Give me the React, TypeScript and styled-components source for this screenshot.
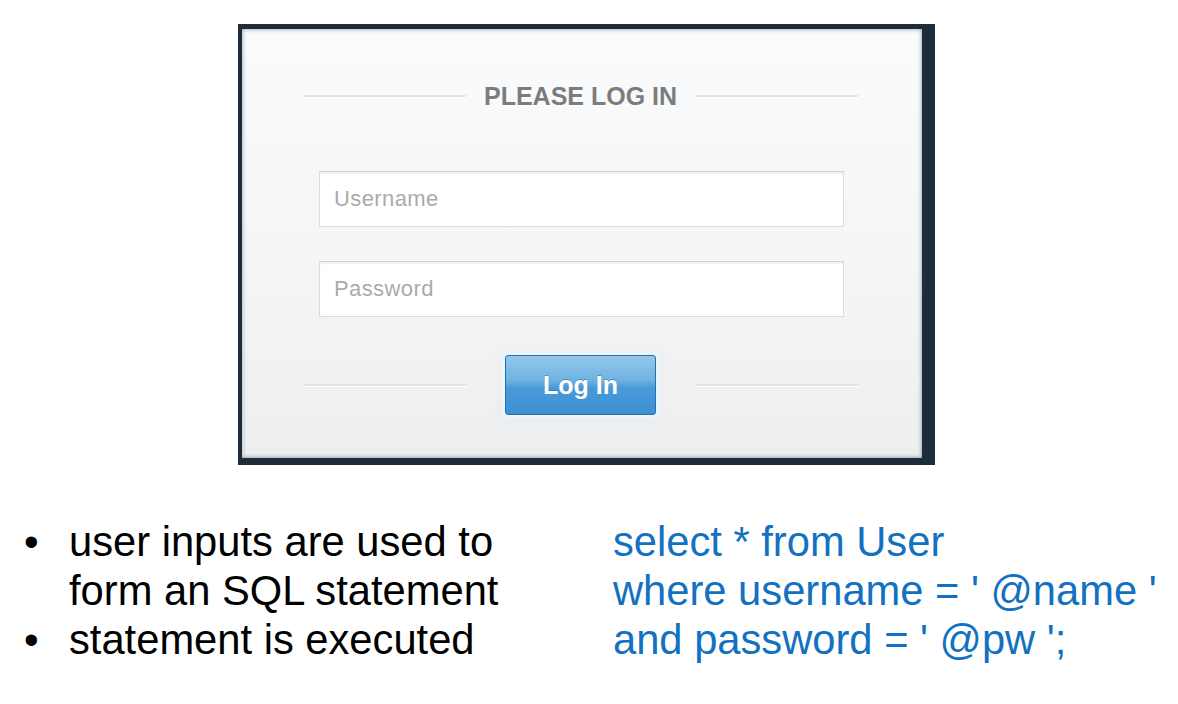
import React from "react";
import styled, { createGlobalStyle } from "styled-components";

const GlobalStyle = createGlobalStyle`
  html, body {
    margin: 0;
    padding: 0;
    background: #ffffff;
  }
  body {
    font-family: "Liberation Sans", Arial, sans-serif;
  }
`;

const Page = styled.div`
  width: 1178px;
  height: 704px;
  overflow: hidden;
  display: flex;
  flex-direction: column;
`;

const Frame = styled.div`
  align-self: flex-start;
  margin: 24px 0 0 238px;
  border-style: solid;
  border-color: #1c2c3b;
  border-width: 5px 13px 7px 4px;
`;

const Panel = styled.div`
  box-sizing: border-box;
  width: 680px;
  height: 429px;
  padding: 52px 64px 0 61px;
  display: flex;
  flex-direction: column;
  background: linear-gradient(180deg, #fafbfc 0%, #f4f5f7 55%, #eceef0 100%);
  box-shadow: inset 0 0 4px rgba(28, 44, 59, 0.55), inset 2px 2px 0 #ffffff;
`;

const Row = styled.div<{ $gap: number; $height: number }>`
  display: flex;
  align-items: center;
  gap: ${(p) => p.$gap}px;
  height: ${(p) => p.$height}px;
`;

const Rule = styled.div`
  flex: 1;
  height: 2px;
  background: #e1e3e5;
  box-shadow: 0 1px 0 #ffffff;
`;

const Title = styled.h1`
  margin: 0;
  font-size: 25px;
  font-weight: bold;
  color: #7b7c7e;
  text-shadow: 0 1px 0 #ffffff;
  white-space: nowrap;
`;

const Field = styled.input<{ $top: number }>`
  box-sizing: border-box;
  width: 525px;
  height: 56px;
  margin: ${(p) => p.$top}px 0 0 16px;
  padding: 0 14px;
  border: 1px solid #d9dbdd;
  border-top-color: #cfd1d3;
  background: #ffffff;
  box-shadow: inset 0 2px 2px rgba(0, 0, 0, 0.06);
  font-family: "Liberation Sans", Arial, sans-serif;
  font-size: 22px;
  letter-spacing: 0.4px;
  color: #555;
  outline: none;

  &::placeholder {
    color: #a9abad;
  }
`;

const ButtonRow = styled(Row)`
  margin-top: 38px;
`;

const LoginButton = styled.button`
  width: 151px;
  height: 60px;
  border: 1px solid #2d6fa6;
  border-radius: 3px;
  background: linear-gradient(
    180deg,
    #93c8ec 0%,
    #6fb2e2 42%,
    #4a9ad8 55%,
    #3c90d2 100%
  );
  box-shadow: 0 0 0 4px #e9f5fd, 0 0 6px 5px rgba(250, 225, 205, 0.35);
  font-family: "Liberation Sans", Arial, sans-serif;
  font-size: 25px;
  font-weight: bold;
  color: #ffffff;
  text-shadow: 0 -1px 0 rgba(20, 70, 120, 0.35);
  cursor: pointer;
`;

const Notes = styled.div`
  display: flex;
  margin-top: 52px;
  padding-left: 24px;
  font-size: 41.7px;
  line-height: 49px;
`;

const BulletList = styled.ul`
  width: 589px;
  margin: 0;
  padding: 0;
  list-style: none;
  color: #000000;
`;

const BulletItem = styled.li`
  display: flex;
`;

const Marker = styled.span`
  width: 45px;
  flex-shrink: 0;
`;

const BulletText = styled.span`
  max-width: 450px;
`;

const Query = styled.div`
  color: #1271c0;
`;

const QueryLine = styled.div`
  white-space: pre;
`;

export default function App() {
  return (
    <>
      <GlobalStyle />
      <Page>
        <Frame>
          <Panel>
            <Row $gap={18} $height={30}>
              <Rule />
              <Title>PLEASE LOG IN</Title>
              <Rule />
            </Row>
            <Field $top={60} type="text" placeholder="Username" />
            <Field $top={34} type="password" placeholder="Password" />
            <ButtonRow $gap={39} $height={60}>
              <Rule />
              <LoginButton>Log In</LoginButton>
              <Rule />
            </ButtonRow>
          </Panel>
        </Frame>

        <Notes>
          <BulletList>
            <BulletItem>
              <Marker>•</Marker>
              <BulletText>user inputs are used to form an SQL statement</BulletText>
            </BulletItem>
            <BulletItem>
              <Marker>•</Marker>
              <BulletText>statement is executed</BulletText>
            </BulletItem>
          </BulletList>
          <Query>
            <QueryLine>select * from User</QueryLine>
            <QueryLine>where username = ' @name '</QueryLine>
            <QueryLine>and password = ' @pw ';</QueryLine>
          </Query>
        </Notes>
      </Page>
    </>
  );
}
